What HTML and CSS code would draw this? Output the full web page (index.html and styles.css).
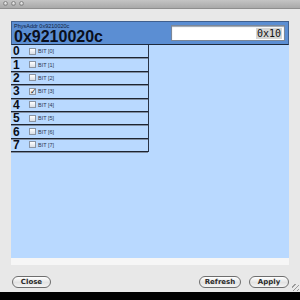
FILE: index.html
```html
<!DOCTYPE html>
<html lang="en">
<head>
    <meta charset="UTF-8">
    <title>Register Bits</title>
    <link rel="stylesheet" href="styles.css">
</head>
<body>
<div class="window">
    <div class="titlebar">
        <span class="light"></span>
        <span class="light"></span>
        <span class="light"></span>
    </div>

    <div class="content">
        <section class="panel">
            <header class="panel-head">
                <div class="addr">
                    <div class="addr-label">PhysAddr 0x9210020c</div>
                    <div class="addr-value">0x9210020c</div>
                </div>
                <div class="value-box"><span class="sel">0x10</span></div>
            </header>

            <div class="bits">
                <div class="bit"><b>0</b><span class="box"></span><span class="name">BIT [0]</span></div>
                <div class="bit"><b>1</b><span class="box"></span><span class="name">BIT [1]</span></div>
                <div class="bit"><b>2</b><span class="box"></span><span class="name">BIT [2]</span></div>
                <div class="bit"><b>3</b><span class="box checked">&#10003;</span><span class="name">BIT [3]</span></div>
                <div class="bit"><b>4</b><span class="box"></span><span class="name">BIT [4]</span></div>
                <div class="bit"><b>5</b><span class="box"></span><span class="name">BIT [5]</span></div>
                <div class="bit"><b>6</b><span class="box"></span><span class="name">BIT [6]</span></div>
                <div class="bit"><b>7</b><span class="box"></span><span class="name">BIT [7]</span></div>
            </div>
        </section>
        <div class="strip"></div>

        <footer class="actions">
            <button>Close</button>
            <div class="right">
                <button>Refresh</button>
                <button>Apply</button>
            </div>
        </footer>
    </div>
    <div class="grip"></div>
</div>
<div class="under"></div>
</body>
</html>
```

FILE: styles.css
```css
* {
    margin: 0; padding: 0; box-sizing: border-box;
}

body {
    width: 300px;
    height: 300px;
    background: #000;
    font-family: "Liberation Sans", Arial, sans-serif;
    overflow: hidden;
}

.window {
    position: relative;
    height: 292px;
    background: #e8e8e8;
}

.titlebar {
    height: 9px;
    background: linear-gradient(#c4c4c4, #a9a9a9);
    border-bottom: 1px solid #8e8e8e;
    display: flex;
    gap: 3px;
    padding: 0 0 0 3px;
    align-items: flex-end;
    overflow: hidden;
}

.light {
    width: 5px;
    height: 5px;
    margin-bottom: 2px;
    border-radius: 50%;
    background: radial-gradient(circle at 50% 30%, #f2f2f2, #a0a0a0);
    border: 1px solid #8a8a8a;
}

.content {
    padding: 12px 11px 0 11px;
}

.panel {
    height: 237px;
    background: #b9d9ff;
}

.panel-head {
    height: 24px;
    background: #5b8ed3;
    border: 1px solid #3f5f8e;
    border-bottom: 1px solid #1e2a3c;
    display: flex;
    justify-content: space-between;
    align-items: flex-start;
    padding: 1px 3px 0 2px;
}

.addr-label {
    font-size: 5.5px;
    line-height: 6px;
    height: 6px;
    color: #10213c;
}

.addr-value {
    font-size: 16px;
    font-weight: bold;
    line-height: 16px;
    height: 16px;
    color: #0a0f1c;
}

.value-box {
    width: 114px;
    height: 16px;
    margin-top: 2px;
    background: #fff;
    border: 1px solid #7b8799;
    box-shadow: inset 0 1px 1px #9aa3b0;
    text-align: right;
    padding: 1px 2px 0 0;
    font-family: "DejaVu Sans Mono", monospace;
    font-size: 10px;
    line-height: 13px;
    color: #111;
}

.sel {
    background: #d4d4d4;
    padding: 0 1px;
}

.bits {
    width: 138px;
    border-right: 1px solid #2a3446;
}

.bit {
    height: 13.4px;
    display: flex;
    align-items: center;
    border-bottom: 1px solid #1e2430;
    box-shadow: 0 1px 0 #7f8ea3;
    padding-left: 2px;
}

.bit b {
    width: 16px;
    font-size: 12px;
    line-height: 12px;
    color: #0b0f18;
}

.box {
    width: 7px;
    height: 7px;
    margin-right: 2px;
    background: linear-gradient(#ffffff, #d8dde4);
    border: 1px solid #8b95a3;
    font-size: 8px;
    line-height: 5px;
    color: #1a1a1a;
    text-align: center;
    overflow: visible;
}

.name {
    font-size: 5.5px;
    color: #2c3850;
}

.strip {
    height: 7px;
    background: #f6f6f6;
}

.actions {
    display: flex;
    justify-content: space-between;
    padding: 11px 0 0 1px;
}

.right {
    display: flex;
    gap: 8px;
}

button {
    height: 12px;
    padding: 0;
    border: 1px solid #6e6e6e;
    border-radius: 6px;
    background: linear-gradient(#ffffff, #e3e3e3 55%, #f4f4f4);
    font-family: "DejaVu Sans", sans-serif;
    font-size: 7px;
    font-weight: bold;
    color: #2a2a2a;
    line-height: 10px;
}

.actions > button {
    width: 39px;
}

.right button:first-child {
    width: 42px;
}

.right button:last-child {
    width: 40px;
}

.grip {
    position: absolute;
    right: 1px;
    bottom: 1px;
    width: 7px;
    height: 7px;
    background: repeating-linear-gradient(135deg, transparent 0 2px, #9a9a9a 2px 3px);
}

.under {
    height: 8px;
    background: #000;
}
```
